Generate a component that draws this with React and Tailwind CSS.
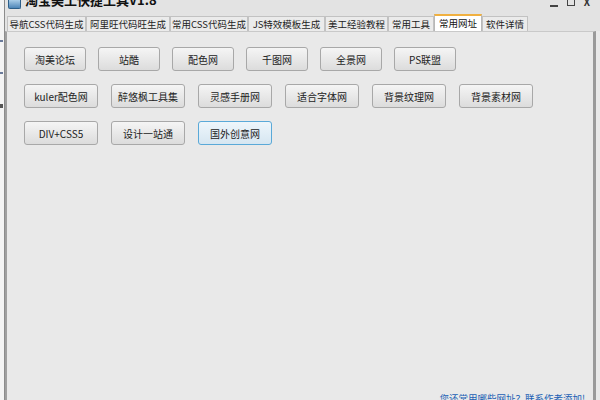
import React from 'react';

// tab strip of the old WinForms tool, widths read off the screenshot
const tabs = [
  { label: '导航CSS代码生成', w: 'w-[79px]' },
  { label: '阿里旺代码旺生成', w: 'w-[84px]' },
  { label: '常用CSS代码生成', w: 'w-[78px]' },
  { label: 'JS特效模板生成', w: 'w-[77px]' },
  { label: '美工经验教程', w: 'w-[63px]' },
  { label: '常用工具', w: 'w-[46px]' },
  { label: '常用网址', w: 'w-[48px]', active: true },
  { label: '软件详情', w: 'w-[46px]' },
];

const rows = [
  { w: 'w-[62px]', gap: 'gap-[12px]', items: ['淘美论坛', '站酷', '配色网', '千图网', '全景网', 'PS联盟'] },
  { w: 'w-[74px]', gap: 'gap-[13px]', items: ['kuler配色网', '醉悠枫工具集', '灵感手册网', '适合字体网', '背景纹理网', '背景素材网'] },
  { w: 'w-[74px]', gap: 'gap-[13px]', items: ['DIV+CSS5', '设计一站通', '国外创意网'] },
];

const font = { fontFamily: '"Noto Sans CJK SC", "Liberation Sans", sans-serif' };

const SiteButton = ({ label, w, focused }) => (
  <button
    className={`${w} h-[24px] rounded-[3px] border text-[10px] text-[#222] flex items-center justify-center ${
      focused
        ? 'border-[#5aa9d8] bg-gradient-to-b from-[#eef6fb] to-[#d6e6f1]'
        : 'border-[#a8a8a8] bg-gradient-to-b from-[#f5f5f5] to-[#dcdcdc]'
    }`}
  >
    {label}
  </button>
);

export default function App() {
  return (
    <div className="w-[600px] h-[400px] overflow-hidden flex bg-[#e9e9e9]" style={font}>
      {/* sliver of the window behind */}
      <div className="w-[5px] h-full bg-[#f4f4f4] border-r border-[#8c8c8c] flex flex-col gap-[30px] pt-[40px]">
        <div className="w-[3px] h-[2px] bg-[#6a7a9a]" />
        <div className="w-[3px] h-[2px] bg-[#6a7a9a]" />
        <div className="w-[3px] h-[4px] bg-[#555]" />
      </div>

      <div className="flex-1 flex flex-col">
        {/* title bar, top half cut off */}
        <div className="h-[14px] flex items-start justify-between bg-[#e3e3e3] overflow-hidden">
          <div className="flex items-start gap-[4px] pl-[3px]">
            <div className="w-[13px] h-[9px] rounded-b-[2px] bg-gradient-to-b from-[#a9cde8] to-[#4d86b8] border border-[#2d5f8a] border-t-0" />
            <span className="text-[13px] font-bold leading-[14px] text-[#111] -mt-[7px]">淘宝美工快捷工具V1.8</span>
          </div>
          <div className="flex items-start gap-[9px] pr-[10px] text-[#333]">
            <div className="w-[8px] h-[2px] bg-[#444] mt-[5px]" />
            <div className="w-[8px] h-[6px] border border-[#444] border-t-0" />
            <span className="text-[10px] leading-[10px] font-bold -mt-[3px]">X</span>
          </div>
        </div>

        {/* tab strip */}
        <div className="h-[17px] flex items-end pl-[2px] bg-[#e3e3e3]">
          {tabs.map((t) =>
            t.active ? (
              <div
                key={t.label}
                className={`${t.w} h-[17px] bg-white border-t-2 border-t-[#f0b040] border-x border-x-[#b8b8b8] text-[9.5px] leading-[15px] text-center text-[#111] whitespace-nowrap`}
              >
                {t.label}
              </div>
            ) : (
              <div
                key={t.label}
                className={`${t.w} h-[15px] bg-[#ebebeb] border border-b-0 border-[#c2c2c2] text-[9.5px] leading-[14px] text-center text-[#222] whitespace-nowrap`}
              >
                {t.label}
              </div>
            )
          )}
        </div>

        {/* page of the active tab */}
        <div className="flex-1 flex flex-col bg-[#e9e9e9] border-t border-[#c9c9c9] border-l-2 border-l-[#a0a0a0] border-r-[3px] border-r-[#9a9a9a] mr-[4px]">
          <div className="flex flex-col gap-[13px] pt-[15px] pl-[17px]">
            {rows.map((r, i) => (
              <div key={i} className={`flex ${r.gap}`}>
                {r.items.map((label) => (
                  <SiteButton key={label} label={label} w={r.w} focused={label === '国外创意网'} />
                ))}
              </div>
            ))}
          </div>
          <div className="mt-auto flex justify-end pr-[8px] h-[9px] overflow-visible">
            <span className="text-[9.5px] leading-[14px] text-[#1a5fb4] whitespace-nowrap">您还常用哪些网址？联系作者添加!</span>
          </div>
        </div>
      </div>
    </div>
  );
}
